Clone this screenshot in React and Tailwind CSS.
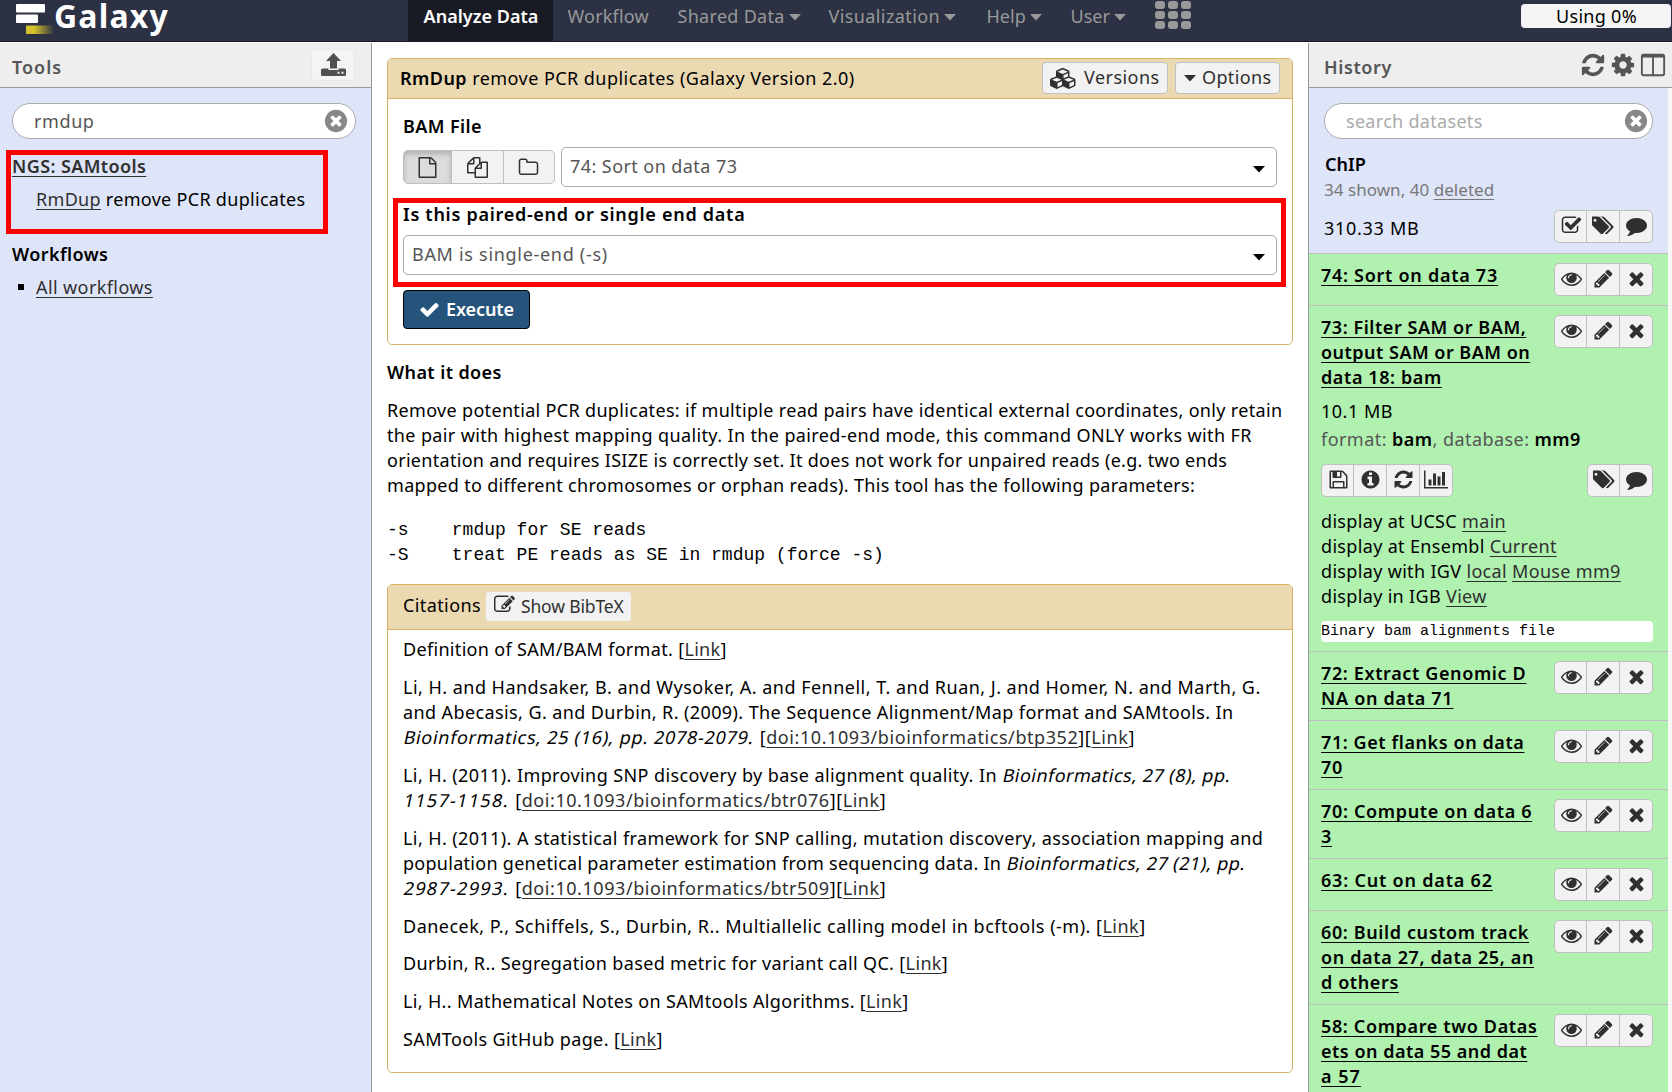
import React from 'react';

const PATHS = {
  check: 'M1671 566q0 40-28 68l-724 724-136 136q-28 28-68 28t-68-28l-136-136-362-362q-28-28-28-68t28-68l136-136q28-28 68-28t68 28l294 295 656-657q28-28 68-28t68 28l136 136q28 28 28 68z',
  times: 'M1490 1322q0 40-28 68l-136 136q-28 28-68 28t-68-28l-294-294-294 294q-28 28-68 28t-68-28l-136-136q-28-28-28-68t28-68l294-294-294-294q-28-28-28-68t28-68l136-136q28-28 68-28t68 28l294 294 294-294q28-28 68-28t68 28l136 136q28 28 28 68t-28 68l-294 294 294 294q28 28 28 68z',
  timesCircle: 'M1277 1122q0-26-19-45l-181-181 181-181q19-19 19-45 0-27-19-46l-90-90q-19-19-46-19-26 0-45 19l-181 181-181-181q-19-19-45-19-27 0-46 19l-90 90q-19 19-19 46 0 26 19 45l181 181-181 181q-19 19-19 45 0 27 19 46l90 90q19 19 46 19 26 0 45-19l181-181 181 181q19 19 45 19 27 0 46-19l90-90q19-19 19-46zm387-226q0 209-103 385.5t-279.5 279.5-385.5 103-385.5-103-279.5-279.5-103-385.5 103-385.5 279.5-279.5 385.5-103 385.5 103 279.5 279.5 103 385.5z',
  eye: 'M1664 960q-152-236-381-353 61 104 61 225 0 185-131.5 316.5t-316.5 131.5-316.5-131.5-131.5-316.5q0-121 61-225-229 117-381 353 133 205 333.5 326.5t434.5 121.5 434.5-121.5 333.5-326.5zm-720-384q0-20-14-34t-34-14q-125 0-214.5 89.5t-89.5 214.5q0 20 14 34t34 14 34-14 14-34q0-86 61-147t147-61q20 0 34-14t14-34zm848 384q0 34-20 69-140 230-376.5 368.5t-499.5 138.5-499.5-139-376.5-368q-20-35-20-69t20-69q140-229 376.5-368t499.5-139 499.5 139 376.5 368q20 35 20 69z',
  pencil: 'M491 1536l91-91-235-235-91 91v107h128v128h107zm523-928q0-22-22-22-10 0-17 7l-542 542q-7 7-7 17 0 22 22 22 10 0 17-7l542-542q7-7 7-17zm-54-192l416 416-832 832h-416v-416zm683 96q0 53-37 90l-166 166-416-416 166-165q36-38 90-38 53 0 91 38l235 234q37 39 37 91z',
  refresh: 'M1639 1056q0 5-1 7-64 268-268 434.5t-478 166.5q-146 0-282.5-55t-243.5-157l-129 129q-19 19-45 19t-45-19-19-45v-448q0-26 19-45t45-19h448q26 0 45 19t19 45-19 45l-137 137q71 66 161 102t187 36q134 0 250-65t186-179q11-17 53-117 8-23 30-23h192q13 0 22.5 9.5t9.5 22.5zm25-800v448q0 26-19 45t-45 19h-448q-26 0-45-19t-19-45 19-45l138-138q-148-137-349-137-134 0-250 65t-186 179q-11 17-53 117-8 23-30 23h-199q-13 0-22.5-9.5t-9.5-22.5v-7q65-268 270-434.5t480-166.5q146 0 284 55.5t245 156.5l130-129q19-19 45-19t45 19 19 45z',
  cog: 'M1152 896q0-106-75-181t-181-75-181 75-75 181 75 181 181 75 181-75 75-181zm512-109v222q0 12-8 23t-20 13l-185 28q-19 54-39 91 35 50 107 138 10 12 10 25t-9 23q-27 37-99 108t-94 71q-12 0-26-9l-138-108q-44 23-91 38-16 136-29 186-7 28-36 28h-222q-14 0-24.5-8.5t-11.5-21.5l-28-184q-49-16-90-37l-141 107q-10 9-25 9-14 0-25-11-126-114-165-168-7-10-7-23 0-12 8-23 15-21 51-66.5t54-70.5q-27-50-41-99l-183-27q-13-2-21-12.5t-8-23.5v-222q0-12 8-23t19-13l186-28q14-46 39-92-40-57-107-138-10-12-10-24 0-10 9-23 26-36 98.5-107.5t94.5-71.5q13 0 26 10l138 107q44-23 91-38 16-136 29-186 7-28 36-28h222q14 0 24.5 8.5t11.5 21.5l28 184q49 16 90 37l142-107q9-9 24-9 13 0 25 10 129 119 165 170 7 8 7 22 0 12-8 23-15 21-51 66.5t-54 70.5q26 50 41 98l183 28q13 2 21 12.5t8 23.5z',
  columns: 'M224 1536h608v-1152h-640v1120q0 13 9.5 22.5t22.5 9.5zm1376-32v-1120h-640v1152h608q13 0 22.5-9.5t9.5-22.5zm128-1216v1216q0 66-47 113t-113 47h-1344q-66 0-113-47t-47-113v-1216q0-66 47-113t113-47h1344q66 0 113 47t47 113z',
  comment: 'M1792 896q0 174-120 321.5t-326 233-450 85.5q-70 0-145-8-198 175-460 242-49 14-114 22-17 2-30.5-9t-17.5-29v-1q-3-4-.5-12t2-10 4.5-9.5l6-9 7-8.5 8-9q7-8 31-34.5t34.5-38 31-39.5 32.5-51 27-59 26-76q-157-89-247.5-220t-90.5-281q0-130 71-248.5t191-204.5 286-136.5 348-50.5q244 0 450 85.5t326 233 120 321.5z',
  tags: 'M384 448q0-53-37.5-90.5t-90.5-37.5-90.5 37.5-37.5 90.5 37.5 90.5 90.5 37.5 90.5-37.5 37.5-90.5zm1067 576q0 53-37 90l-491 492q-39 37-91 37-53 0-90-37l-715-716q-38-37-64.5-101t-26.5-117v-416q0-52 38-90t90-38h416q53 0 117 26.5t102 64.5l715 714q37 39 37 91zm384 0q0 53-37 90l-491 492q-39 37-91 37-36 0-59-14t-53-45l470-470q37-37 37-90 0-52-37-91l-715-714q-38-38-102-64.5t-117-26.5h224q53 0 117 26.5t102 64.5l715 714q37 39 37 91z',
  checkSquare: 'M1472 930v318q0 119-84.5 203.5t-203.5 84.5h-832q-119 0-203.5-84.5t-84.5-203.5v-832q0-119 84.5-203.5t203.5-84.5h832q63 0 117 25 15 7 18 23 3 17-9 29l-49 49q-10 10-23 10-3 0-9-2-23-6-45-6h-832q-66 0-113 47t-47 113v832q0 66 47 113t113 47h832q66 0 113-47t47-113v-254q0-13 9-22l64-64q10-10 23-10 6 0 12 3 20 8 20 29zm231-489l-814 814q-24 24-57 24t-57-24l-430-430q-24-24-24-57t24-57l110-110q24-24 57-24t57 24l263 263 647-647q24-24 57-24t57 24l110 110q24 24 24 57t-24 57z',
  info: 'M1152 1376v-160q0-14-9-23t-23-9h-96v-512q0-14-9-23t-23-9h-320q-14 0-23 9t-9 23v160q0 14 9 23t23 9h96v320h-96q-14 0-23 9t-9 23v160q0 14 9 23t23 9h448q14 0 23-9t9-23zm-128-896v-160q0-14-9-23t-23-9h-192q-14 0-23 9t-9 23v160q0 14 9 23t23 9h192q14 0 23-9t9-23zm640 416q0 209-103 385.5t-279.5 279.5-385.5 103-385.5-103-279.5-279.5-103-385.5 103-385.5 279.5-279.5 385.5-103 385.5 103 279.5 279.5 103 385.5z',
  save: 'M512 1536h768v-384h-768v384zm896 0h128v-896q0-14-10-38.5t-20-34.5l-281-281q-10-10-34-20t-39-10v416q0 40-28 68t-68 28h-576q-40 0-68-28t-28-68v-416h-128v1280h128v-416q0-40 28-68t68-28h832q40 0 68 28t28 68v416zm-384-928v-320q0-13-9.5-22.5t-22.5-9.5h-192q-13 0-22.5 9.5t-9.5 22.5v320q0 13 9.5 22.5t22.5 9.5h192q13 0 22.5-9.5t9.5-22.5zm640 32v928q0 40-28 68t-68 28h-1344q-40 0-68-28t-28-68v-1344q0-40 28-68t68-28h928q40 0 88 20t76 48l280 280q28 28 48 76t20 88z',
  chart: 'M640 896v512h-256v-512h256zm384-512v1024h-256v-1024h256zm1024 1152v128h-2048v-1536h128v1408h1920zm-640-896v768h-256v-768h256zm384-384v1152h-256v-1152h256z',
  file: 'M1596 380q28 28 48 76t20 88v1152q0 40-28 68t-68 28h-1344q-40 0-68-28t-28-68v-1600q0-40 28-68t68-28h896q40 0 88 20t76 48zm-444-244v376h376q-10-29-22-41l-313-313q-12-12-41-22zm384 1528v-1024h-416q-40 0-68-28t-28-68v-416h-768v1536h1280z',
  files: 'M1696 384q40 0 68 28t28 68v1216q0 40-28 68t-68 28h-960q-40 0-68-28t-28-68v-288h-544q-40 0-68-28t-28-68v-672q0-40 20-88t48-76l408-408q28-28 76-48t88-20h416q40 0 68 28t28 68v328q68-40 128-40h416zm-544 213l-299 299h299v-299zm-640-384l-299 299h299v-299zm196 647l316-316v-416h-384v416q0 40-28 68t-68 28h-416v640h512v-256q0-40 20-88t48-76zm956 804v-1152h-384v416q0 40-28 68t-68 28h-416v640h896z',
  folder: 'M1600 1312v-704q0-40-28-68t-68-28h-704q-40 0-68-28t-28-68v-64q0-40-28-68t-68-28h-320q-40 0-68 28t-28 68v960q0 40 28 68t68 28h1216q40 0 68-28t28-68zm128-704v704q0 92-66 158t-158 66h-1216q-92 0-158-66t-66-158v-960q0-92 66-158t158-66h320q92 0 158 66t66 158v32h672q92 0 158 66t66 158z',
  edit: 'M888 1184l116-116-152-152-116 116v56h96v96h56zm440-720q-16-16-33 1l-350 350q-17 17-1 33t33-1l350-350q17-17 1-33zm80 594v190q0 119-84.5 203.5t-203.5 84.5h-832q-119 0-203.5-84.5t-84.5-203.5v-832q0-119 84.5-203.5t203.5-84.5h832q63 0 117 25 15 7 18 23 3 17-9 29l-49 49q-14 14-32 8-23-6-45-6h-832q-66 0-113 47t-47 113v832q0 66 47 113t113 47h832q66 0 113-47t47-113v-126q0-13 9-22l64-64q15-15 35-7t20 29zm-96-738l288 288-672 672h-288v-288zm444 132l-92 92-288-288 92-92q28-28 68-28t68 28l152 152q28 28 28 68t-28 68z',
  cubes: 'M640 1632l384-192v-314l-384 164v342zm-64-454l404-173-404-173-404 173zm1088 454l384-192v-314l-384 164v342zm-64-454l404-173-404-173-404 173zm-448-293l384-165v-266l-384 164v267zm-64-379l441-189-441-189-441 189zm1088 518v416q0 36-19 67t-52 47l-448 224q-25 14-57 14t-57-14l-448-224q-4-2-7-4-2 2-7 4l-448 224q-25 14-57 14t-57-14l-448-224q-33-16-52-47t-19-67v-416q0-38 21.5-70t56.5-48l434-186v-400q0-38 21.5-70t56.5-48l448-192q23-10 50-10t50 10l448 192q35 16 56.5 48t21.5 70v400l434 186q36 16 57 48t21 70z',
};
const WIDTHS = { tags: 1835, chart: 2048, cubes: 2304 };

function Icon({ name, className = 'h-[21px]' }) {
  return (
    <svg viewBox={`0 0 ${WIDTHS[name] || 1792} 1792`} className={`shrink-0 fill-current ${className}`}>
      <path d={PATHS[name]} />
    </svg>
  );
}

function Caret({ className }) {
  return (
    <svg viewBox="0 0 12 7" className={`h-[7px] w-[12px] shrink-0 fill-current ${className || ''}`}>
      <path d="M0 0h12L6 6.5z" />
    </svg>
  );
}

const link = 'text-[#303030] underline decoration-1 underline-offset-[3px] [text-decoration-skip-ink:none]';
const A = ({ children }) => <a className={link}>{children}</a>;
const I = ({ children, t = 'tracking-[0.48px]' }) => (
  <span className={`ml-px inline-block -skew-x-12 ${t}`}>{children}</span>
);
const Line = ({ children, t }) => <div className={`whitespace-pre ${t}`}>{children}</div>;

function NavItem({ label, w, caret, active, t = '' }) {
  return (
    <div className={`flex h-[41px] items-start pt-[4px] ${w} ${active ? 'bg-[#191b24] pl-[15.5px] font-semibold text-white' : 'pl-[14.5px] text-[#999]'}`}>
      <span className={`whitespace-nowrap ${t}`}>{label}</span>
      {caret && <Caret className="ml-[4px] mt-[10px]" />}
    </div>
  );
}

function Buttons({ names, className = '' }) {
  return (
    <div className={`flex h-[33px] shrink-0 divide-x divide-[#bfbfbf] overflow-hidden rounded-[5px] border border-[#bfbfbf] bg-[#f2f2f2] text-[#303030] ${className}`}>
      {names.map((n) => (
        <div key={n} className="flex w-[33px] items-center justify-center pb-[2px] first:w-[32px] first:pl-px last:w-[32px]">
          <Icon name={n} />
        </div>
      ))}
    </div>
  );
}

function Dataset({ lines, h, children }) {
  return (
    <div className={`border-t border-[#bfbfbf] bg-[#b0f1b0] pl-[12px] pr-[15px] pt-[9px] ${h}`}>
      <div className="flex justify-between">
        <div className="font-semibold leading-[25px] text-black">
          {lines.map(([s, t]) => (
            <div key={s} className={`whitespace-nowrap ${t}`}>
              <span className="underline decoration-1 underline-offset-[3px] [text-decoration-skip-ink:none]">{s}</span>
            </div>
          ))}
        </div>
        <Buttons names={['eye', 'pencil', 'times']} />
      </div>
      {children}
    </div>
  );
}

function SearchBox({ text, textClass, className }) {
  return (
    <div className={`flex h-[36px] items-center justify-between rounded-full border border-[#aaa] bg-white pl-[21px] ${className}`}>
      <span className={`pt-px ${textClass}`}>{text}</span>
      <Icon name="timesCircle" className="h-[26px] text-[#888]" />
    </div>
  );
}

function Select({ text, t, className }) {
  return (
    <div className={`flex h-[40px] items-center justify-between rounded-[5px] border border-[#aaa] bg-white pl-[8px] pr-[11px] text-[#555] ${className}`}>
      <span className={`whitespace-nowrap pb-[2px] ${t}`}>{text}</span>
      <Caret className="mt-[5px] text-black" />
    </div>
  );
}

function Header() {
  return (
    <header className="flex h-[42px] shrink-0 border-b border-[#191b24] bg-[#2c3143]">
      <div className="flex w-[408px] pl-[16px]">
        <svg viewBox="0 0 38 36" className="h-[36px] w-[38px]">
          <defs>
            <linearGradient id="bar">
              <stop offset="0.3" stopColor="#d4c02a" />
              <stop offset="1" stopColor="#d4c02a" stopOpacity="0" />
            </linearGradient>
          </defs>
          <rect x="0" y="4" width="29" height="8.5" rx="1" fill="#fff" />
          <rect x="0" y="14.5" width="22" height="8.5" rx="1" fill="#fff" />
          <rect x="10" y="25.5" width="28" height="8.5" fill="url(#bar)" />
        </svg>
        <span className="text-[32px] font-bold leading-[32px] tracking-[1.2px] text-white">Galaxy</span>
      </div>
      <NavItem label="Analyze Data" w="w-[145px]" active t="tracking-[0.03px]" />
      <NavItem label="Workflow" w="w-[110px]" t="tracking-[0.2px]" />
      <NavItem label="Shared Data" w="w-[151px]" caret t="tracking-[0.3px]" />
      <NavItem label="Visualization" w="w-[158px]" caret t="tracking-[0.4px]" />
      <NavItem label="Help" w="w-[84px]" caret />
      <NavItem label="User" w="w-[84px]" caret />
      <div className="ml-[15px] mt-px grid h-[28px] w-[36px] grid-cols-3 gap-x-[3px] gap-y-[2.5px]">
        {[...Array(9)].map((_, i) => (
          <div key={i} className="rounded-[3px] bg-[#999]" />
        ))}
      </div>
      <div className="ml-auto mr-px mt-[4px] h-[24px] w-[150px] rounded-[4px] bg-[#f5f5f5] pl-px text-center leading-[24px] tracking-[0.3px] text-black">
        Using 0%
      </div>
    </header>
  );
}

function ToolPanel() {
  return (
    <aside className="w-[372px] shrink-0 border-r border-[#999] bg-[#dfe5f9]">
      <div className="flex h-[45px] justify-between border-b border-[#999] bg-[#eee] pl-[12px] pr-[16px]">
        <span className="pt-[12px] font-semibold tracking-[1px] text-[#555]">Tools</span>
        <div className="mt-[6px] flex h-[32px] w-[44px] items-start justify-center rounded-[4px] border border-[#e8e8e8] bg-[#f4f4f4] pt-[3px]">
          <svg viewBox="0 0 25 24" className="h-[24px] w-[25px] fill-[#505050]">
            <path d="M12.5 0 20 8h-4v7.500H9V8H5z" />
            <path d="M1.500 15.500H7.500V17h10v-1.500h6q1.500 0 1.500 1.500v4.500q0 1.500-1.500 1.500h-22Q0 23 0 21.500V17q0-1.500 1.500-1.500z" />
            <rect x="16.500" y="18.700" width="2" height="2" fill="#eee" />
            <rect x="20.500" y="18.700" width="2" height="2" fill="#eee" />
          </svg>
        </div>
      </div>
      <SearchBox text="rmdup" textClass="tracking-[0.6px] text-[#555]" className="ml-[12px] mr-[15px] mt-[15px] pr-[6px]" />
      <div className="relative pl-[12px] pt-[15px]">
        <div className="absolute left-[6px] top-[11px] h-[84px] w-[322px] border-[5px] border-[#f00]" />
        <div className={`font-semibold tracking-[0.4px] ${link}`}>NGS: SAMtools</div>
        <div className="mt-[8px] pl-[24px] tracking-[0.3px] text-black">
          <A>RmDup</A> remove PCR duplicates
        </div>
        <div className="mt-[30px] font-semibold tracking-[0.42px] text-black">Workflows</div>
        <div className="mt-[8px] flex items-center">
          <span className="mb-px ml-[6px] mr-[12px] h-[6px] w-[6px] bg-black" />
          <span className="tracking-[0.4px]">
            <A>All workflows</A>
          </span>
        </div>
      </div>
    </aside>
  );
}

function TopButton({ children, className }) {
  return (
    <div className={`flex h-[32px] items-center rounded-[4px] border border-[#bfbfbf] bg-[#f2f2f2] text-[#303030] ${className}`}>
      {children}
    </div>
  );
}

function Main() {
  return (
    <main className="w-[936px] shrink-0 bg-white pl-[15px] pr-[15px] text-black">
      <section className="mt-[15px] h-[287px] rounded-[5px] border border-[#d8b365]">
        <div className="flex h-[40px] border-b border-[#d8b365] bg-[#ebd9b2] pl-[12px] pr-[12px] pt-[3px]">
          <div className="mr-auto whitespace-nowrap pt-[4px] tracking-[0.45px]">
            <b className="font-semibold">RmDup</b> remove PCR duplicates (Galaxy Version 2.0)
          </div>
          <TopButton className="mr-[7px] w-[126px] pl-[7px]">
            <Icon name="cubes" className="h-[21px] w-[27px]" />
            <span className="pb-px pl-[7px] tracking-[0.45px]">Versions</span>
          </TopButton>
          <TopButton className="w-[105px] pl-[8px]">
            <Caret className="mr-[6px]" />
            <span className="pb-px tracking-[0.35px]">Options</span>
          </TopButton>
        </div>
        <div className="relative pl-[15px] pr-[15px] pt-[15px]">
          <div className="font-semibold tracking-[0.4px]">BAM File</div>
          <div className="mt-[8px] flex items-center">
            <div className="mr-[6px] flex h-[34px] w-[152px] divide-x divide-[#bfbfbf] overflow-hidden rounded-[5px] border border-[#bfbfbf] bg-[#f2f2f2] text-[#303030]">
              <div className="flex w-[48px] items-center justify-center bg-[#dcdcdc] shadow-[inset_0_3px_5px_rgba(0,0,0,0.2)]">
                <Icon name="file" />
              </div>
              <div className="flex flex-1 items-center justify-center">
                <Icon name="files" />
              </div>
              <div className="flex flex-1 items-center justify-center">
                <Icon name="folder" />
              </div>
            </div>
            <Select text="74: Sort on data 73" t="tracking-[0.43px]" className="w-[716px]" />
          </div>
          <div className="absolute left-[5px] top-[99px] h-[89px] w-[893px] border-[5px] border-[#f00]" />
          <div className="mt-[15px] font-semibold tracking-[0.72px]">Is this paired-end or single end data</div>
          <Select text="BAM is single-end (-s)" t="tracking-[0.7px]" className="mt-[8px] w-[874px]" />
          <div className="mt-[15px] flex h-[39px] w-[127px] items-center rounded-[4px] border border-black bg-[#25537b] pl-[15px] font-semibold text-white">
            <Icon name="check" />
            <span className="pl-[6px] tracking-[-0.1px]">Execute</span>
          </div>
        </div>
      </section>

      <div className="mt-[15px] font-semibold leading-[25px] tracking-[0.4px]">What it does</div>
      <div className="mt-[13px] leading-[25.100px]">
        <Line t="tracking-[0.328px]">Remove potential PCR duplicates: if multiple read pairs have identical external coordinates, only retain</Line>
        <Line t="tracking-[0.370px]">the pair with highest mapping quality. In the paired-end mode, this command ONLY works with FR</Line>
        <Line t="tracking-[0.300px]">orientation and requires ISIZE is correctly set. It does not work for unpaired reads (e.g. two ends</Line>
        <Line t="tracking-[0.311px]">mapped to different chromosomes or orphan reads). This tool has the following parameters:</Line>
      </div>
      <pre className="mt-[20px] font-['Liberation_Mono',monospace] text-[18px] leading-[25.100px]">{`-s    rmdup for SE reads
-S    treat PE reads as SE in rmdup (force -s)`}</pre>

      <section className="mt-[15px] h-[489px] rounded-[5px] border border-[#d8b365]">
        <div className="flex h-[45px] border-b border-[#d8b365] bg-[#ebd9b2] pl-[15px]">
          <span className="pt-[8px] tracking-[0.4px]">Citations</span>
          <div className="ml-[5px] mt-[7px] flex h-[29px] w-[145px] items-center rounded-[3px] bg-[#f2f2f2] pl-[8px] text-[17.500px] text-[#303030]">
            <Icon name="edit" className="-mt-[3px] h-[21px]" />
            <span className="whitespace-nowrap pl-[6px] tracking-[-0.15px]">Show BibTeX</span>
          </div>
        </div>
        <div className="flex flex-col gap-[12.700px] pl-[15px] pt-[7.400px] leading-[25.100px]">
          <Line t="tracking-[0.32px]">Definition of SAM/BAM format. [<A>Link</A>]</Line>
          <div>
            <Line t="tracking-[0.475px]">Li, H. and Handsaker, B. and Wysoker, A. and Fennell, T. and Ruan, J. and Homer, N. and Marth, G.</Line>
            <Line t="tracking-[0.4px]">and Abecasis, G. and Durbin, R. (2009). The Sequence Alignment/Map format and SAMtools. In</Line>
            <Line t="tracking-[0.575px]"><I t="tracking-[0.7px]">Bioinformatics, 25 (16), pp. 2078-2079.</I> [<A>doi:10.1093/bioinformatics/btp352</A>][<A>Link</A>]</Line>
          </div>
          <div>
            <Line t="tracking-[0.4px]">Li, H. (2011). Improving SNP discovery by base alignment quality. In <I>Bioinformatics, 27 (8), pp.</I></Line>
            <Line t="tracking-[0.558px]"><I t="tracking-[1.3px]">1157-1158.</I> [<A>doi:10.1093/bioinformatics/btr076</A>][<A>Link</A>]</Line>
          </div>
          <div>
            <Line t="tracking-[0.4px]">Li, H. (2011). A statistical framework for SNP calling, mutation discovery, association mapping and</Line>
            <Line t="tracking-[0.28px]">population genetical parameter estimation from sequencing data. In <I>Bioinformatics, 27 (21), pp.</I></Line>
            <Line t="tracking-[0.558px]"><I t="tracking-[1.3px]">2987-2993.</I> [<A>doi:10.1093/bioinformatics/btr509</A>][<A>Link</A>]</Line>
          </div>
          <Line t="tracking-[0.49px]">Danecek, P., Schiffels, S., Durbin, R.. Multiallelic calling model in bcftools (-m). [<A>Link</A>]</Line>
          <Line t="tracking-[0.35px]">Durbin, R.. Segregation based metric for variant call QC. [<A>Link</A>]</Line>
          <Line t="tracking-[0.34px]">Li, H.. Mathematical Notes on SAMtools Algorithms. [<A>Link</A>]</Line>
          <Line t="tracking-[0.38px]">SAMTools GitHub page. [<A>Link</A>]</Line>
        </div>
      </section>
    </main>
  );
}

function HistoryPanel() {
  return (
    <aside className="min-w-0 flex-1 border-l border-[#999] bg-[#f8f8f8]">
      <div className="flex h-[45px] border-b border-[#999] bg-[#eee] pl-[15px] text-[#555]">
        <span className="mr-auto pt-[12px] font-semibold tracking-[0.6px]">History</span>
        <Icon name="refresh" className="mr-[4px] mt-[9px] h-[26px]" />
        <Icon name="cog" className="mr-[4px] mt-[9px] h-[26px]" />
        <Icon name="columns" className="mr-[6px] mt-[9px] h-[26px]" />
      </div>
      <div className="w-[359px]">
        <div className="h-[165px] bg-[#dfe5f9] pl-[15px] pr-[15px] pt-[15px]">
          <SearchBox text="search datasets" textClass="tracking-[0.3px] text-[#aaa]" className="pr-[3px]" />
          <div className="mt-[13px] pl-px font-semibold text-black">ChIP</div>
          <div className="text-[17px] leading-[25px] tracking-[0.04px] text-[#777]">
            34 shown, 40 <span className="underline decoration-1 underline-offset-[3px]">deleted</span>
          </div>
          <div className="mt-[8px] flex items-start justify-between">
            <span className="pt-[6px] tracking-[0.7px] text-black">310.33 MB</span>
            <Buttons names={['checkSquare', 'tags', 'comment']} />
          </div>
        </div>
        <Dataset h="h-[52px]" lines={[['74: Sort on data 73', 'tracking-[0.72px]']]} />
        <Dataset
          h="h-[346px]"
          lines={[
            ['73: Filter SAM or BAM,', 'tracking-[0.55px]'],
            ['output SAM or BAM on', 'tracking-[0.48px]'],
            ['data 18: bam', 'tracking-[0.6px]'],
          ]}
        >
          <div className="mt-[9px] tracking-[0.5px] text-black">10.1 MB</div>
          <div className="mt-[3px] whitespace-nowrap tracking-[0.45px] text-[#555]">
            format: <b className="font-semibold text-black">bam</b>, database: <b className="font-semibold text-black">mm9</b>
          </div>
          <div className="mt-[12px] flex justify-between">
            <Buttons names={['save', 'info', 'refresh', 'chart']} />
            <Buttons names={['tags', 'comment']} />
          </div>
          <div className="mt-[12px] whitespace-nowrap leading-[25.100px] tracking-[0.33px] text-black">
            <div>display at UCSC <A>main</A></div>
            <div>display at Ensembl <A>Current</A></div>
            <div>display with IGV <A>local</A> <A>Mouse mm9</A></div>
            <div>display in IGB <A>View</A></div>
          </div>
          <pre className="mt-[12px] h-[21px] rounded-[4px] bg-white font-['Liberation_Mono',monospace] text-[15px] leading-[22px] text-black">Binary bam alignments file</pre>
        </Dataset>
        <Dataset h="h-[69px]" lines={[['72: Extract Genomic D', 'tracking-[0.63px]'], ['NA on data 71', 'tracking-[0.7px]']]} />
        <Dataset h="h-[69px]" lines={[['71: Get flanks on data', 'tracking-[0.58px]'], ['70', 'tracking-[0.6px]']]} />
        <Dataset h="h-[69px]" lines={[['70: Compute on data 6', 'tracking-[0.66px]'], ['3', 'tracking-[0.6px]']]} />
        <Dataset h="h-[52px]" lines={[['63: Cut on data 62', 'tracking-[0.8px]']]} />
        <Dataset
          h="h-[94px]"
          lines={[
            ['60: Build custom track', 'tracking-[0.62px]'],
            ['on data 27, data 25, an', 'tracking-[0.63px]'],
            ['d others', 'tracking-[0.6px]'],
          ]}
        />
        <Dataset
          h="h-[94px]"
          lines={[
            ['58: Compare two Datas', 'tracking-[0.64px]'],
            ['ets on data 55 and dat', 'tracking-[0.5px]'],
            ['a 57', 'tracking-[1px]'],
          ]}
        />
      </div>
    </aside>
  );
}

export default function App() {
  return (
    <div className="flex h-[1092px] w-[1672px] flex-col overflow-hidden bg-white font-['Noto_Sans','Open_Sans',sans-serif] text-[18px] leading-[25px]">
      <Header />
      <div className="flex min-h-0 flex-1 pt-px">
        <ToolPanel />
        <Main />
        <HistoryPanel />
      </div>
    </div>
  );
}
